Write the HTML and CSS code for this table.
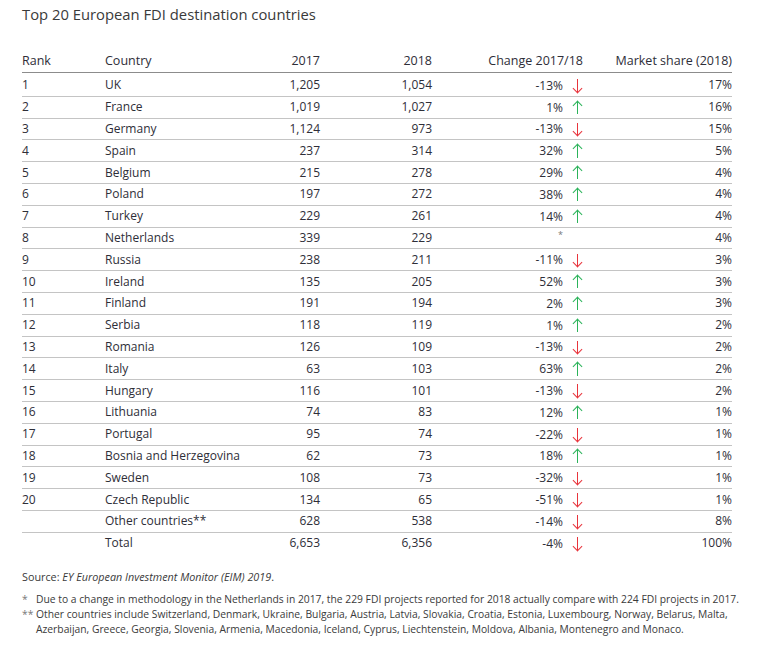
FILE: index.html
```html
<!DOCTYPE html>
<html lang="en">
<head>
<meta charset="UTF-8">
<meta name="viewport" content="width=device-width, initial-scale=1.0">
<title>Top 20 European FDI destination countries</title>
<link rel="stylesheet" href="styles.css">
</head>
<body>
<div class="page">
  <h1>Top 20 European FDI destination countries</h1>

  <table class="fdi-table">
    <thead>
      <tr>
        <th class="col-rank">Rank</th>
        <th class="col-country">Country</th>
        <th class="col-num">2017</th>
        <th class="col-num2">2018</th>
        <th class="col-change">Change 2017/18</th>
        <th class="col-share">Market share (2018)</th>
      </tr>
    </thead>
    <tbody>
      <tr><td>1</td><td>UK</td><td class="num">1,205</td><td class="num">1,054</td><td class="change"><span>-13%</span><i class="arrow down"></i></td><td class="num">17%</td></tr>
      <tr><td>2</td><td>France</td><td class="num">1,019</td><td class="num">1,027</td><td class="change"><span>1%</span><i class="arrow up"></i></td><td class="num">16%</td></tr>
      <tr><td>3</td><td>Germany</td><td class="num">1,124</td><td class="num">973</td><td class="change"><span>-13%</span><i class="arrow down"></i></td><td class="num">15%</td></tr>
      <tr><td>4</td><td>Spain</td><td class="num">237</td><td class="num">314</td><td class="change"><span>32%</span><i class="arrow up"></i></td><td class="num">5%</td></tr>
      <tr><td>5</td><td>Belgium</td><td class="num">215</td><td class="num">278</td><td class="change"><span>29%</span><i class="arrow up"></i></td><td class="num">4%</td></tr>
      <tr><td>6</td><td>Poland</td><td class="num">197</td><td class="num">272</td><td class="change"><span>38%</span><i class="arrow up"></i></td><td class="num">4%</td></tr>
      <tr><td>7</td><td>Turkey</td><td class="num">229</td><td class="num">261</td><td class="change"><span>14%</span><i class="arrow up"></i></td><td class="num">4%</td></tr>
      <tr><td>8</td><td>Netherlands</td><td class="num">339</td><td class="num">229</td><td class="change"><span class="star">*</span><i class="arrow"></i></td><td class="num">4%</td></tr>
      <tr><td>9</td><td>Russia</td><td class="num">238</td><td class="num">211</td><td class="change"><span>-11%</span><i class="arrow down"></i></td><td class="num">3%</td></tr>
      <tr><td>10</td><td>Ireland</td><td class="num">135</td><td class="num">205</td><td class="change"><span>52%</span><i class="arrow up"></i></td><td class="num">3%</td></tr>
      <tr><td>11</td><td>Finland</td><td class="num">191</td><td class="num">194</td><td class="change"><span>2%</span><i class="arrow up"></i></td><td class="num">3%</td></tr>
      <tr><td>12</td><td>Serbia</td><td class="num">118</td><td class="num">119</td><td class="change"><span>1%</span><i class="arrow up"></i></td><td class="num">2%</td></tr>
      <tr><td>13</td><td>Romania</td><td class="num">126</td><td class="num">109</td><td class="change"><span>-13%</span><i class="arrow down"></i></td><td class="num">2%</td></tr>
      <tr><td>14</td><td>Italy</td><td class="num">63</td><td class="num">103</td><td class="change"><span>63%</span><i class="arrow up"></i></td><td class="num">2%</td></tr>
      <tr><td>15</td><td>Hungary</td><td class="num">116</td><td class="num">101</td><td class="change"><span>-13%</span><i class="arrow down"></i></td><td class="num">2%</td></tr>
      <tr><td>16</td><td>Lithuania</td><td class="num">74</td><td class="num">83</td><td class="change"><span>12%</span><i class="arrow up"></i></td><td class="num">1%</td></tr>
      <tr><td>17</td><td>Portugal</td><td class="num">95</td><td class="num">74</td><td class="change"><span>-22%</span><i class="arrow down"></i></td><td class="num">1%</td></tr>
      <tr><td>18</td><td>Bosnia and Herzegovina</td><td class="num">62</td><td class="num">73</td><td class="change"><span>18%</span><i class="arrow up"></i></td><td class="num">1%</td></tr>
      <tr><td>19</td><td>Sweden</td><td class="num">108</td><td class="num">73</td><td class="change"><span>-32%</span><i class="arrow down"></i></td><td class="num">1%</td></tr>
      <tr><td>20</td><td>Czech Republic</td><td class="num">134</td><td class="num">65</td><td class="change"><span>-51%</span><i class="arrow down"></i></td><td class="num">1%</td></tr>
      <tr><td></td><td>Other countries**</td><td class="num">628</td><td class="num">538</td><td class="change"><span>-14%</span><i class="arrow down"></i></td><td class="num">8%</td></tr>
      <tr class="total"><td></td><td>Total</td><td class="num">6,653</td><td class="num">6,356</td><td class="change"><span>-4%</span><i class="arrow down"></i></td><td class="num">100%</td></tr>
    </tbody>
  </table>

  <p class="source">Source: <em>EY European Investment Monitor (EIM) 2019</em>.</p>

  <div class="notes">
    <div class="note"><span class="mark">*</span><span>Due to a change in methodology in the Netherlands in 2017, the 229 FDI projects reported for 2018 actually compare with 224 FDI projects in 2017.</span></div>
    <div class="note"><span class="mark">**</span><span>Other countries include Switzerland, Denmark, Ukraine, Bulgaria, Austria, Latvia, Slovakia, Croatia, Estonia, Luxembourg, Norway, Belarus, Malta, Azerbaijan, Greece, Georgia, Slovenia, Armenia, Macedonia, Iceland, Cyprus, Liechtenstein, Moldova, Albania, Montenegro and Monaco.</span></div>
  </div>
</div>
</body>
</html>
```

FILE: styles.css
```css
body {
  margin: 0;
  background-color: #fff;
  font-family: "Open Sans", Arial, sans-serif;
  color: #2e2e38;
}
.page {
  padding: 4px 22px 0 22px;
}
h1 {
  margin: 0;
  font-size: 14.8px;
  font-weight: normal;
  line-height: 21px;
  color: #3a3a3a;
}
.fdi-table {
  margin-top: 23px;
  border-collapse: collapse;
  table-layout: fixed;
  width: 708px;
  font-size: 12px;
}
.fdi-table th {
  font-weight: normal;
  font-size: 12.5px;
  text-align: left;
  height: 24px;
  padding: 0;
  border-bottom: 1px solid #8c8c8c;
  vertical-align: middle;
}
.fdi-table td {
  height: 20.8px;
  padding: 0;
  border-bottom: 1px solid #c4c4c4;
  vertical-align: middle;
  line-height: 14px;
}
.fdi-table tbody tr:first-child td {
  padding-top: 2px;
}
.fdi-table tr.total td {
  border-bottom: none;
}
.col-rank { width: 83px; }
.col-country { width: 135px; }
.col-num { width: 80px; }
.col-num2 { width: 112px; }
.col-change { width: 151px; }
.col-share { width: 147px; }
.fdi-table th.col-num,
.fdi-table th.col-num2,
.fdi-table th.col-share,
.fdi-table td.num {
  text-align: right;
}
.fdi-table th.col-change {
  text-align: right;
  padding-right: 2px;
}
.fdi-table td.change {
  text-align: right;
  white-space: nowrap;
}
.change span {
  display: inline-block;
  vertical-align: middle;
}
.change .star {
  color: #777;
  font-size: 9px;
  position: relative;
  top: -3px;
}
.arrow {
  display: inline-block;
  width: 12px;
  height: 13px;
  margin-left: 9px;
  margin-right: 1px;
  vertical-align: middle;
  position: relative;
}
.arrow::before {
  content: "";
  position: absolute;
  left: 5px;
  top: 0;
  width: 1.4px;
  height: 13px;
}
.arrow::after {
  content: "";
  position: absolute;
  left: 2px;
  width: 6px;
  height: 6px;
  border-style: solid;
  border-width: 0;
}
.arrow.down::before { background: #e8343c; }
.arrow.down::after {
  bottom: 0.5px;
  border-color: #e8343c;
  border-right-width: 1.4px;
  border-bottom-width: 1.4px;
  transform: rotate(45deg);
}
.arrow.up::before { background: #2bb35a; }
.arrow.up::after {
  top: 0.5px;
  border-color: #2bb35a;
  border-left-width: 1.4px;
  border-top-width: 1.4px;
  transform: rotate(45deg);
}
.source {
  margin: 16px 0 0 0;
  font-size: 10.8px;
  line-height: 14px;
  color: #3a3a3a;
}
.notes {
  margin-top: 8px;
  font-size: 10.3px;
  line-height: 15.2px;
  color: #3a3a3a;
}
.note {
  display: flex;
}
.note .mark {
  flex: 0 0 14px;
  color: #777;
}
```
